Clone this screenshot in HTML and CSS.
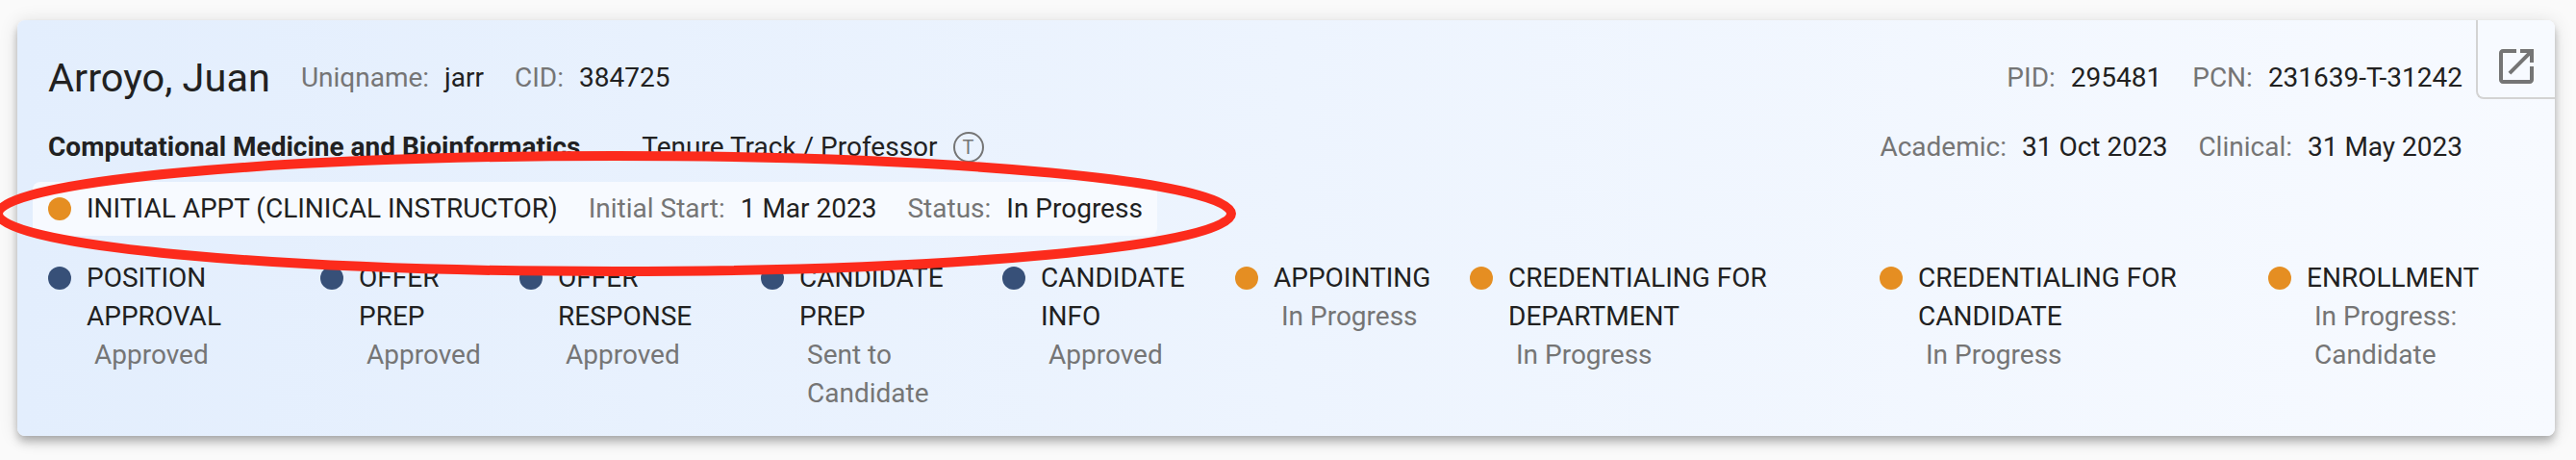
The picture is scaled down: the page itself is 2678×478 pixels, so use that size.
FILE: index.html
```html
<!DOCTYPE html>
<html lang="en">
<head>
  <meta charset="UTF-8">
  <meta name="viewport" content="width=device-width, initial-scale=1.0">
  <title>Appointment</title>
  <link rel="stylesheet" href="styles.css">
</head>
<body>
  <div class="card">
    <button class="open-btn" aria-label="Open">
      <svg viewBox="0 0 24 24"><path d="M19 19H5V5h7V3H5c-1.11 0-2 .9-2 2v14c0 1.1.89 2 2 2h14c1.1 0 2-.9 2-2v-7h-2v7zM14 3v2h3.59l-9.83 9.83 1.41 1.41L19 6.41V10h2V3h-7z"/></svg>
    </button>

    <div class="row row--name">
      <span class="name">Arroyo, Juan</span>
      <span class="field"><span class="label">Uniqname:</span>jarr</span>
      <span class="field"><span class="label">CID:</span>384725</span>
      <div class="row-end">
        <span class="field"><span class="label">PID:</span>295481</span>
        <span class="field"><span class="label">PCN:</span>231639-T-31242</span>
      </div>
    </div>

    <div class="row row--dept">
      <span class="dept">Computational Medicine and Bioinformatics</span>
      <span class="track">Tenure Track / Professor</span>
      <span class="badge">T</span>
      <div class="row-end">
        <span class="field"><span class="label">Academic:</span>31 Oct 2023</span>
        <span class="field"><span class="label">Clinical:</span>31 May 2023</span>
      </div>
    </div>

    <div class="appt">
      <span class="dot dot--progress"></span>
      <span class="appt-title">INITIAL APPT (CLINICAL INSTRUCTOR)</span>
      <span class="field"><span class="label">Initial Start:</span>1 Mar 2023</span>
      <span class="field"><span class="label">Status:</span>In Progress</span>
    </div>

    <div class="steps">
      <div class="step">
        <span class="dot dot--done"></span>
        <div>POSITION<br>APPROVAL<div class="status">Approved</div></div>
      </div>
      <div class="step">
        <span class="dot dot--done"></span>
        <div>OFFER<br>PREP<div class="status">Approved</div></div>
      </div>
      <div class="step">
        <span class="dot dot--done"></span>
        <div>OFFER<br>RESPONSE<div class="status">Approved</div></div>
      </div>
      <div class="step">
        <span class="dot dot--done"></span>
        <div>CANDIDATE<br>PREP<div class="status">Sent to<br>Candidate</div></div>
      </div>
      <div class="step">
        <span class="dot dot--done"></span>
        <div>CANDIDATE<br>INFO<div class="status">Approved</div></div>
      </div>
      <div class="step">
        <span class="dot dot--progress"></span>
        <div>APPOINTING<div class="status">In Progress</div></div>
      </div>
      <div class="step">
        <span class="dot dot--progress"></span>
        <div>CREDENTIALING FOR<br>DEPARTMENT<div class="status">In Progress</div></div>
      </div>
      <div class="step">
        <span class="dot dot--progress"></span>
        <div>CREDENTIALING FOR<br>CANDIDATE<div class="status">In Progress</div></div>
      </div>
      <div class="step">
        <span class="dot dot--progress"></span>
        <div>ENROLLMENT<div class="status">In Progress:<br>Candidate</div></div>
      </div>
    </div>
  </div>

  <svg class="highlight" viewBox="0 0 1300 300">
    <ellipse cx="639" cy="222" rx="641" ry="60"/>
  </svg>
</body>
</html>
```

FILE: styles.css
```css
* {
  box-sizing: border-box;
}

body {
  margin: 0;
  padding: 21px 22px 0 18px;
  height: 478px;
  overflow: hidden;
  background: #fafafa;
  font-family: Roboto, sans-serif;
  font-size: 28px;
  line-height: 40px;
  color: #212121;
  white-space: nowrap;
}

.card {
  position: relative;
  height: 432px;
  padding: 38px 16px 0;
  border-radius: 8px;
  background: linear-gradient(90deg, #e3eefd, #f7faff);
  box-shadow: 0 4px 8px -2px rgba(0, 0, 0, 0.2), 0 8px 10px rgba(0, 0, 0, 0.14), 0 2px 20px rgba(0, 0, 0, 0.12);
}

.open-btn {
  position: absolute;
  top: 0;
  right: 0;
  width: 82px;
  height: 82px;
  padding: 16px 16px 0;
  border: 0 solid #d3d3d3;
  border-width: 0 0 2px 2px;
  border-radius: 0 8px 0 8px;
  background: #f7faff;
}

.open-btn svg {
  display: block;
  width: 48px;
  height: 48px;
  fill: #757575;
}

.row {
  display: flex;
  align-items: center;
  gap: 32px;
  height: 44px;
  padding: 0 80px 0 16px;
}

.row-end {
  display: flex;
  gap: 32px;
  margin-left: auto;
}

.row--dept {
  margin-top: 28px;
}

.name {
  font-size: 41.5px;
}

.field {
  display: flex;
  gap: 16px;
}

.label,
.status {
  color: #757575;
}

.dept {
  font-weight: 700;
}

.track {
  margin-left: 32px;
}

.badge {
  width: 32px;
  height: 32px;
  margin-left: -16px;
  border: 2px solid #757575;
  border-radius: 50%;
  color: #757575;
  font-size: 20px;
  line-height: 29px;
  text-align: center;
}

.appt {
  display: flex;
  align-items: center;
  gap: 32px;
  width: 1169px;
  height: 56px;
  margin-top: 14px;
  padding: 0 16px;
  border-radius: 8px;
  background: #f7faff;
}

.appt-title {
  margin-left: -16px;
}

.dot {
  flex: none;
  width: 24px;
  height: 24px;
  border-radius: 50%;
}

.dot--progress {
  background: #e58e22;
}

.dot--done {
  background: #375078;
}

.steps {
  display: grid;
  grid-template-columns: 283px 207px 251px 251px 242px 244px 426px 404px auto;
  margin-top: 24px;
  padding-left: 16px;
}

.step {
  display: flex;
  gap: 16px;
}

.step .dot {
  margin-top: 8px;
}

.status {
  padding-left: 8px;
}

/* red ring around the initial appointment */
.highlight {
  position: absolute;
  top: 0;
  left: 0;
  width: 1300px;
  height: 300px;
  fill: none;
  stroke: #fc2b1c;
  stroke-width: 10;
}
```
